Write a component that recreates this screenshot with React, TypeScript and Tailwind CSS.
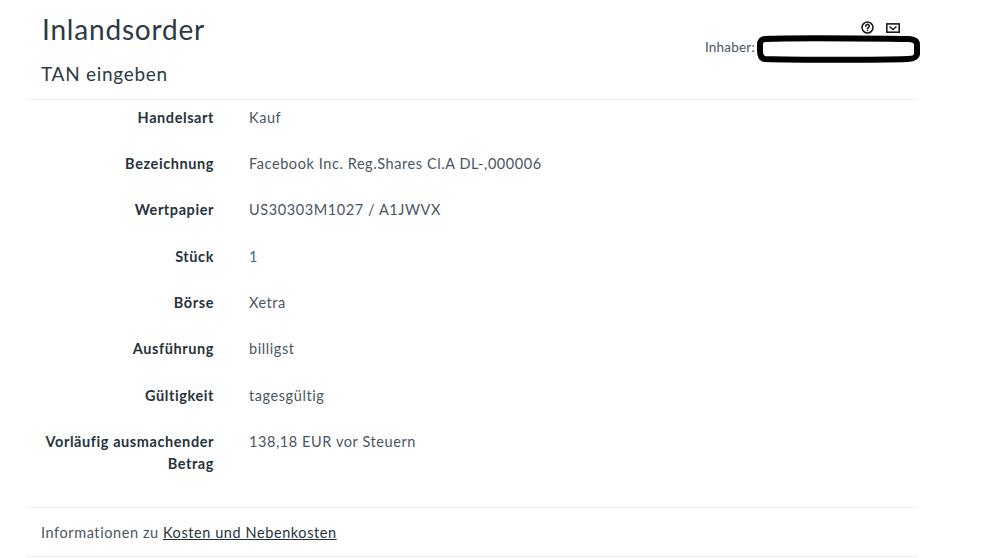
const rows: [string, string, string?][] = [
  ["Handelsart", "Kauf"],
  ["Bezeichnung", "Facebook Inc. Reg.Shares Cl.A DL-,000006"],
  ["Wertpapier", "US30303M1027 / A1JWVX"],
  ["Stück", "1", "text-[#3d6f8c]"],
  ["Börse", "Xetra"],
  ["Ausführung", "billigst"],
  ["Gültigkeit", "tagesgültig"],
  ["Vorläufig ausmachender Betrag", "138,18 EUR vor Steuern"],
];

export default function App() {
  return (
    <div className="h-[558px] w-[998px] overflow-hidden bg-white font-['Lato','Noto_Sans',sans-serif] text-[#33404a]">
      <div className="ml-[27px] w-[890px]">
        <header className="relative h-[100px] border-b border-[#ececec] pl-[14px]">
          <h1 className="pl-[1px] pt-[12px] text-[28px] leading-[34px] tracking-[0.8px] text-[#2c3a44]">Inlandsorder</h1>
          <h2 className="pt-[15px] text-[19px] leading-[26px] tracking-[0.7px] text-[#2c3a44]">TAN eingeben</h2>
          <div className="absolute right-[17px] top-[21px] flex items-center gap-[12px]">
            <svg width="13" height="13" viewBox="0 0 14 14" fill="none" stroke="#1c1c1c" strokeWidth="1.7">
              <circle cx="7" cy="7" r="5.9" />
              <path d="M5.1 5.6a1.9 1.9 0 1 1 2.8 1.6c-.6.3-.9.6-.9 1.2" strokeLinecap="round" />
              <circle cx="7" cy="10.300" r=".8" fill="#1c1c1c" stroke="none" />
            </svg>
            <svg width="14" height="10" viewBox="0 0 14 10" fill="none" stroke="#1c1c1c" strokeWidth="1.6">
              <rect x=".8" y=".9" width="12.400" height="8.300" />
              <path d="M3.500 3.500L7 6.500l3.500-3" />
            </svg>
          </div>
          <div className="absolute right-[162px] top-[38px] text-[13.5px] leading-[18px] tracking-[0.2px] text-[#4a565f]">Inhaber:</div>
          <svg className="absolute left-[729px] top-[35px]" width="164" height="28" viewBox="0 0 164 28" fill="none">
            <path d="M9 4C40 2.500 112 3.500 152 4c6 .2 9 2 9 5.500v9c0 3-3 5.500-9 5.500-30 1-112 1-143 0C5 23.500 4 20 4 16V9c0-3 2-4.800 5-5Z" stroke="#000" strokeWidth="6" />
          </svg>
        </header>
        <dl className="pt-[6.500px]">
          {rows.map(([label, value, color]) => (
            <div key={label} className="mb-[24.400px] flex items-start gap-[35px] text-[14.500px] leading-[22px] tracking-[0.58px]">
              <dt className="w-[187px] text-right font-bold text-[#26333c]">{label}</dt>
              <dd className={color ?? "text-[#4a565f]"}>{value}</dd>
            </div>
          ))}
        </dl>
        <div className="mt-[31.500px] border-y border-[#ececec] pb-[13px] pt-[14px] pl-[14px] text-[14.500px] leading-[21px] tracking-[0.58px] text-[#4a565f]">
          Informationen zu <a className="text-[#26333c] underline" href="#">Kosten und Nebenkosten</a>
        </div>
      </div>
    </div>
  );
}
